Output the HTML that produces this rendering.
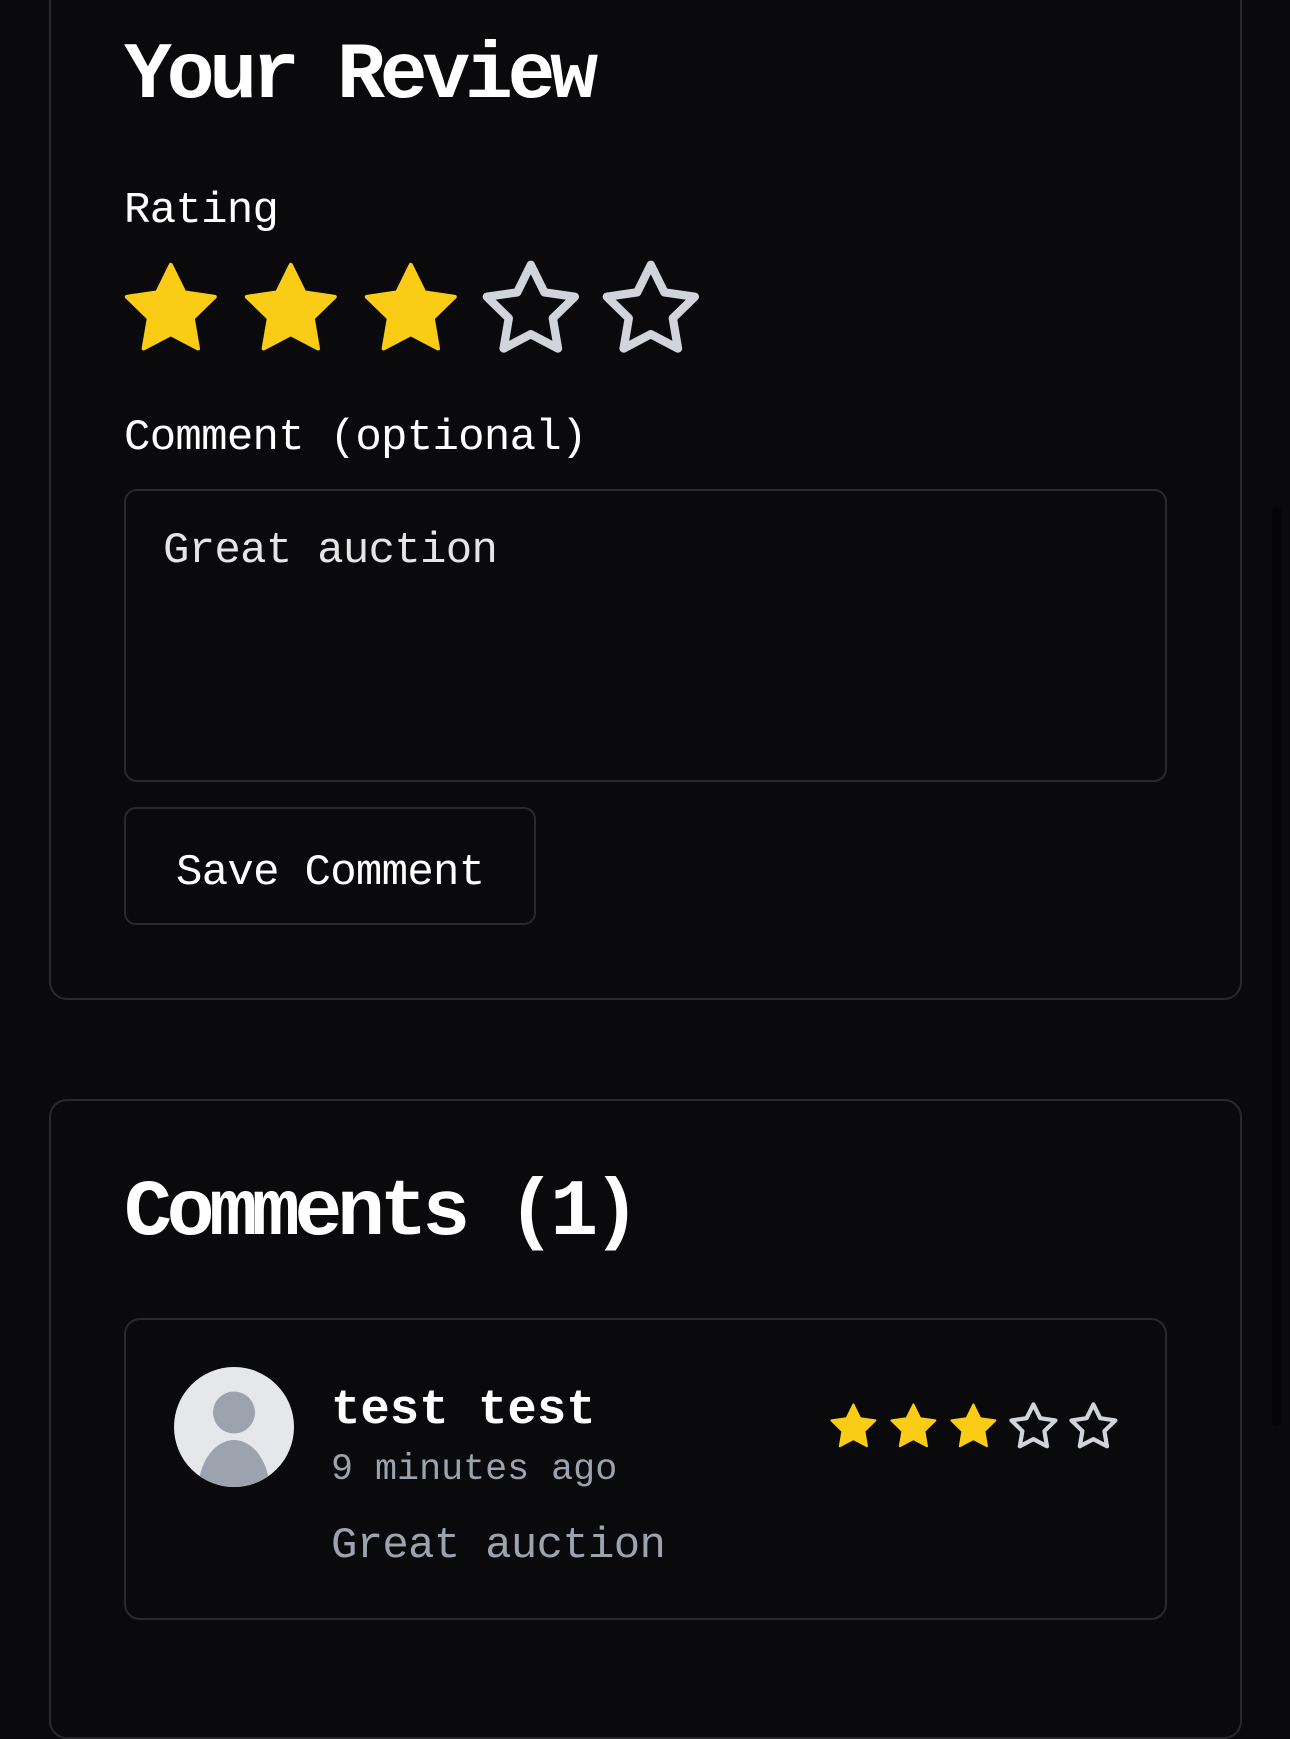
<!DOCTYPE html>
<html><head><meta charset="utf-8"><style>
html,body{margin:0;padding:0;}
body{width:1290px;height:1682px;background:#0a0a0c;position:relative;overflow:hidden;font-family:"Liberation Mono",monospace;color:#fff;}
.a{position:absolute;line-height:1;white-space:pre;}
.box{position:absolute;border:2px solid #29292d;box-sizing:border-box;background:#0a0a0c;}
.b{font-size:44px;letter-spacing:-0.7px;}
.h{font-size:80px;font-weight:bold;letter-spacing:-5.4px;}
svg{position:absolute;overflow:visible;}
</style></head><body>
<div class="box" style="left:49px;top:-40px;width:1193px;height:1040px;border-radius:18px;"></div>
<div style="position:absolute;left:1272px;top:506px;width:9px;height:920px;border-radius:5px;background:#050505;"></div>
<div class="a h" style="left:124px;top:37px;">Your Review</div>
<div class="a b" style="left:124px;top:189px;">Rating</div>

<svg style="left:122px;top:260px" width="620" height="100" viewBox="0 0 620 100">
<defs><path id="s" d="M12 2l3.09 6.26L22 9.27l-5 4.87 1.18 6.88L12 17.77l-6.18 3.25L7 14.14 2 9.27l6.91-1.01L12 2z"/></defs>
<g transform="translate(-4,-4) scale(4.4)" stroke-linejoin="round"><use href="#s" fill="#facc15" stroke="#facc15" stroke-width="0.9"/></g>
<g transform="translate(116,-4) scale(4.4)" stroke-linejoin="round"><use href="#s" fill="#facc15" stroke="#facc15" stroke-width="0.9"/></g>
<g transform="translate(236,-4) scale(4.4)" stroke-linejoin="round"><use href="#s" fill="#facc15" stroke="#facc15" stroke-width="0.9"/></g>
<g transform="translate(356,-4) scale(4.4)" stroke-linejoin="round"><use href="#s" fill="none" stroke="#d1d5db" stroke-width="1.9"/></g>
<g transform="translate(476,-4) scale(4.4)" stroke-linejoin="round"><use href="#s" fill="none" stroke="#d1d5db" stroke-width="1.9"/></g>
</svg>

<div class="a b" style="left:124px;top:416px;">Comment (optional)</div>
<div class="box" style="left:124px;top:489px;width:1043px;height:293px;border-radius:13px;"></div>
<div class="a b" style="left:163px;top:529px;color:#e5e5e5;">Great auction</div>
<div class="box" style="left:124px;top:807px;width:412px;height:118px;border-radius:12px;"></div>
<div class="a b" style="left:176px;top:851px;">Save Comment</div>

<div class="box" style="left:49px;top:1099px;width:1193px;height:640px;border-radius:18px;"></div>
<div class="a h" style="left:124px;top:1174px;">Comments (1)</div>
<div class="box" style="left:124px;top:1318px;width:1043px;height:302px;border-radius:16px;"></div>

<svg style="left:174px;top:1367px" width="120" height="120" viewBox="0 0 120 120">
<defs><clipPath id="c"><circle cx="60" cy="60" r="60"/></clipPath></defs>
<circle cx="60" cy="60" r="60" fill="#e5e7eb"/>
<g clip-path="url(#c)" fill="#9ca3af">
<ellipse cx="60" cy="45.5" rx="21" ry="21"/>
<ellipse cx="60" cy="125" rx="36" ry="52"/>
</g>
</svg>

<div class="a" style="left:331px;top:1386px;font-size:49px;font-weight:bold;">test test</div>
<div class="a" style="left:331px;top:1452px;font-size:36.7px;color:#9ca3af;">9 minutes ago</div>
<div class="a b" style="left:331px;top:1524px;color:#9ca3af;">Great auction</div>

<svg style="left:828px;top:1402px" width="300" height="55" viewBox="0 0 300 55">
<g transform="translate(-1,-2) scale(2.2)" stroke-linejoin="round"><use href="#s" fill="#facc15" stroke="#facc15" stroke-width="0.9"/></g>
<g transform="translate(59,-2) scale(2.2)" stroke-linejoin="round"><use href="#s" fill="#facc15" stroke="#facc15" stroke-width="0.9"/></g>
<g transform="translate(119,-2) scale(2.2)" stroke-linejoin="round"><use href="#s" fill="#facc15" stroke="#facc15" stroke-width="0.9"/></g>
<g transform="translate(179,-2) scale(2.2)" stroke-linejoin="round"><use href="#s" fill="none" stroke="#d1d5db" stroke-width="1.9"/></g>
<g transform="translate(239,-2) scale(2.2)" stroke-linejoin="round"><use href="#s" fill="none" stroke="#d1d5db" stroke-width="1.9"/></g>
</svg>
</body></html>
